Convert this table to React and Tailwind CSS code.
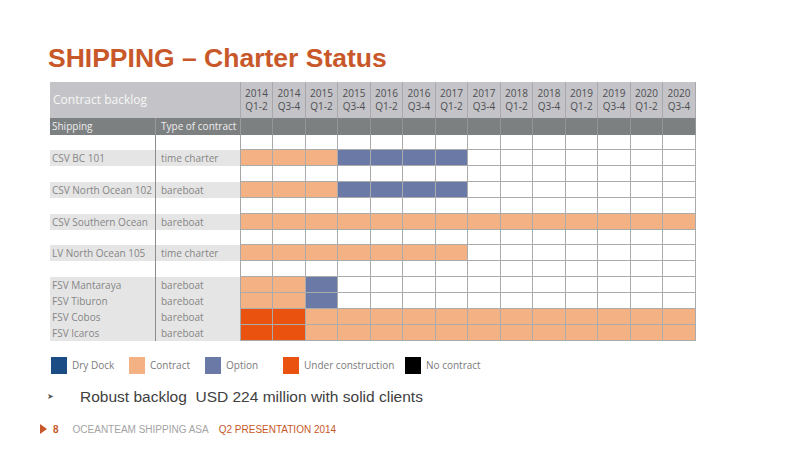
import React from "react";

const periods = [
  ["2014", "Q1-2"], ["2014", "Q3-4"], ["2015", "Q1-2"], ["2015", "Q3-4"],
  ["2016", "Q1-2"], ["2016", "Q3-4"], ["2017", "Q1-2"], ["2017", "Q3-4"],
  ["2018", "Q1-2"], ["2018", "Q3-4"], ["2019", "Q1-2"], ["2019", "Q3-4"],
  ["2020", "Q1-2"], ["2020", "Q3-4"],
];
const widths = ["w-[32px]", "w-[33px]", "w-[32px]", "w-[33px]", "w-[32px]", "w-[33px]", "w-[32px]", "w-[33px]", "w-[32px]", "w-[33px]", "w-[32px]", "w-[33px]", "w-[32px]", "w-[33px]"];

const colors = {
  C: "bg-[#f4b183]",
  O: "bg-[#6b79a6]",
  U: "bg-[#e9530f]",
  W: "bg-white",
};

const rows = [
  null,
  ["CSV BC 101", "time charter", "CCCOOOOWWWWWWW"],
  null,
  ["CSV North Ocean 102", "bareboat", "CCCOOOOWWWWWWW"],
  null,
  ["CSV Southern Ocean", "bareboat", "CCCCCCCCCCCCCC"],
  null,
  ["LV North Ocean 105", "time charter", "CCCCCCCWWWWWWW"],
  null,
  ["FSV Mantaraya", "bareboat", "CCOWWWWWWWWWWW"],
  ["FSV Tiburon", "bareboat", "CCOWWWWWWWWWWW"],
  ["FSV Cobos", "bareboat", "UUCCCCCCCCCCCC"],
  ["FSV Icaros", "bareboat", "UUCCCCCCCCCCCC"],
];

const cellText = "font-['Open_Sans',sans-serif] text-[10px] text-[#858585] leading-none";

function Row({ r, short }) {
  const pattern = r ? r[2] : "WWWWWWWWWWWWWW";
  return (
    <div className={`flex ${short ? "h-[15px]" : "h-[16px]"}`}>
      <div className={`w-[106px] flex items-center pl-[2px] border-r border-[#8c8c8c] ${r ? "bg-[#e5e5e5]" : "bg-white"} ${cellText}`}>
        {r ? r[0] : ""}
      </div>
      <div className={`w-[85px] flex items-center pl-[5px] border-r border-[#a8a8a8] ${r ? "bg-[#e5e5e5]" : "bg-white"} ${cellText}`}>
        {r ? r[1] : ""}
      </div>
      {pattern.split("").map((s, i) => (
        <div key={i} className={`${widths[i]} h-full border-r border-b border-[#ababab] ${colors[s]}`} />
      ))}
    </div>
  );
}

function Legend({ color, label, w }) {
  return (
    <div className={`flex items-center ${w}`}>
      <div className={`w-[16px] h-[17px] ${color}`} />
      <span className="ml-[5px] font-['Open_Sans',sans-serif] text-[10px] text-[#7a7a7a]">{label}</span>
    </div>
  );
}

export default function App() {
  return (
    <div className="w-[800px] h-[450px] bg-white overflow-hidden font-['Liberation_Sans',sans-serif]">
      <div className="pt-[45px] pl-[48px] h-[82px]">
        <h1 className="text-[26.5px] font-bold leading-none text-[#c8582a]">
          SHIPPING – Charter Status
        </h1>
      </div>
      <div className="ml-[50px] w-[646px]">
        <div className="flex h-[36px] bg-[#c4c4c8]">
          <div className="w-[191px] flex items-center pl-[3px] border-r border-[#a8a8ac] font-['Open_Sans',sans-serif] text-[12px] text-[#f6f6f6]">
            Contract backlog
          </div>
          {periods.map((p, i) => (
            <div key={i} className={`${widths[i]} flex flex-col items-center justify-center border-r border-[#a8a8ac] font-['Open_Sans',sans-serif] text-[10px] leading-[13px] text-[#4e4e52]`}>
              <span>{p[0]}</span>
              <span>{p[1]}</span>
            </div>
          ))}
        </div>
        <div className="flex h-[17px] bg-[#7d8081]">
          <div className="w-[106px] flex items-center pl-[2px] border-r border-[#9a9a9a] font-['Open_Sans',sans-serif] text-[10px] text-[#eeeeee]">
            Shipping
          </div>
          <div className="w-[85px] flex items-center pl-[5px] border-r border-[#9a9a9a] font-['Open_Sans',sans-serif] text-[10px] text-[#eeeeee]">
            Type of contract
          </div>
          {periods.map((p, i) => (
            <div key={i} className={`${widths[i]} border-r border-[#959595]`} />
          ))}
        </div>
        {rows.map((r, i) => (
          <Row key={i} r={r} short={i === 0 || i === 6} />
        ))}
      </div>
      <div className="flex items-center ml-[51px] mt-[16px] h-[17px]">
        <Legend color="bg-[#1b4d84]" label="Dry Dock" w="w-[78px]" />
        <Legend color="bg-[#f4b183]" label="Contract" w="w-[76px]" />
        <Legend color="bg-[#6b79a6]" label="Option" w="w-[78px]" />
        <Legend color="bg-[#e9530f]" label="Under construction" w="w-[122px]" />
        <Legend color="bg-black" label="No contract" w="w-[100px]" />
      </div>
      <div className="flex items-center ml-[47px] mt-[13px] h-[20px]">
        <span className="text-[8px] text-[#555]">➤</span>
        <span className="ml-[26px] text-[15.5px] text-[#404040]">Robust backlog&nbsp; USD 224 million with solid clients</span>
      </div>
      <div className="flex items-center ml-[40px] mt-[15px] h-[14px] text-[10px]">
        <svg width="7" height="10" viewBox="0 0 7 10"><polygon points="0,0 7,5 0,10" fill="#c8582a" /></svg>
        <span className="ml-[6px] font-bold text-[#c8582a]">8</span>
        <span className="ml-[14px] text-[#a3a3a3]">OCEANTEAM SHIPPING ASA</span>
        <span className="ml-[10px] text-[#c8582a]">Q2 PRESENTATION 2014</span>
      </div>
    </div>
  );
}
